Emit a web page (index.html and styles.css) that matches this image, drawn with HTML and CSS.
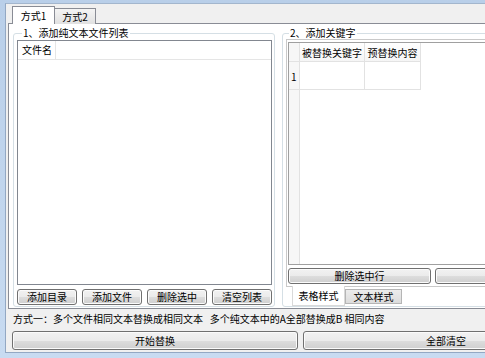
FILE: index.html
```html
<!DOCTYPE html>
<html lang="zh-CN">
<head>
    <meta charset="UTF-8">
    <title>文本批量替换</title>
    <link rel="stylesheet" href="styles.css">
</head>
<body>
    <div class="window">
        <div class="client">
            <div class="tabcontrol">
                <div class="tabstrip">
                    <div class="tab active">方式1</div>
                    <div class="tab">方式2</div>
                </div>
                <div class="tabpage">
                    <fieldset class="group group-files">
                        <legend>1、添加纯文本文件列表</legend>
                        <div class="listview">
                            <div class="lv-header">
                                <div class="lv-col">文件名</div>
                            </div>
                        </div>
                        <div class="btn-row">
                            <button class="btn btn-small">添加目录</button>
                            <button class="btn btn-small">添加文件</button>
                            <button class="btn btn-small">删除选中</button>
                            <button class="btn btn-small">清空列表</button>
                        </div>
                    </fieldset>

                    <fieldset class="group group-keys">
                        <legend>2、添加关键字</legend>
                        <div class="subpage">
                            <div class="grid">
                                <div class="cell corner"></div>
                                <div class="cell head">被替换关键字</div>
                                <div class="cell head">预替换内容</div>
                                <div class="cell blank"></div>
                                <div class="cell rowhead">1</div>
                                <div class="cell"></div>
                                <div class="cell"></div>
                                <div class="cell blank"></div>
                                <div class="cell rowfill"></div>
                            </div>
                            <div class="btn-row">
                                <button class="btn btn-wide">删除选中行</button>
                                <button class="btn btn-wide"></button>
                            </div>
                        </div>
                        <div class="subtabs">
                            <div class="subtab active">表格样式</div>
                            <div class="subtab">文本样式</div>
                        </div>
                    </fieldset>
                </div>
            </div>

            <div class="hint">方式一：多个文件相同文本替换成相同文本&nbsp;&nbsp;&nbsp;多个纯文本中的A全部替换成B 相同内容</div>

            <div class="actions">
                <button class="btn btn-main">开始替换</button>
                <button class="btn btn-main btn-clear">全部清空</button>
            </div>
        </div>
    </div>
</body>
</html>
```

FILE: styles.css
```css
body, html {
    margin: 0;
    padding: 0;
    background-color: #c2d6ee;
}
.window {
    width: 485px;
    height: 358px;
    box-sizing: border-box;
    overflow: hidden;
    background: linear-gradient(#b9cfe9, #c8dbf1);
    padding: 3px 0 5px 5px;
    font-family: "Noto Sans CJK SC", sans-serif;
    font-size: 10px;
    line-height: 12px;
    color: #000;
}
.client {
    width: 600px;
    height: 100%;
    box-sizing: border-box;
    background-color: #f0f0f0;
    border-top: 1px solid #a3b6cd;
    border-left: 1px solid #93a8c3;
    border-bottom: 1px solid #93a8c3;
    padding: 2px 0 0 2px;
}

/* main tab control */
.tabstrip {
    display: flex;
    align-items: flex-end;
    height: 18px;
    padding-left: 4px;
    margin-bottom: -1px;
    position: relative;
    z-index: 1;
}
.tab {
    width: 42px;
    height: 16px;
    box-sizing: border-box;
    border: 1px solid #898c95;
    border-bottom: none;
    background: linear-gradient(#f4f4f4, #e1e1e1);
    text-align: center;
    padding-top: 2px;
    margin-left: -1px;
}
.tab.active {
    width: 43px;
    height: 18px;
    margin-left: 0;
    padding-top: 3px;
    background-color: #fff;
    background-image: none;
}
.tabpage {
    width: 590px;
    height: 286px;
    box-sizing: border-box;
    border: 1px solid #898c95;
    background-color: #fff;
    display: flex;
    gap: 7px;
    padding: 3px 0 0 4px;
}

/* group boxes */
.group {
    margin: 0;
    padding: 0;
    border: 1px solid #d5dfe5;
    border-radius: 3px;
    box-sizing: border-box;
    height: 280px;
    display: flex;
    flex-direction: column;
}
.group legend {
    padding: 0 1px;
    margin-left: 5px;
    line-height: 12px;
}
.group-files {
    width: 263px;
    padding: 0 2px 0 3px;
}
.group-keys {
    width: 320px;
    padding-left: 3px;
}
.group-keys legend {
    margin-left: 3px;
}

.listview {
    margin-top: 1px;
    height: 245px;
    box-sizing: border-box;
    border: 1px solid #828790;
    background-color: #fff;
}
.lv-header {
    height: 18px;
    border-bottom: 1px solid #e5e5e5;
    display: flex;
}
.lv-col {
    width: 33px;
    padding-left: 4px;
    line-height: 18px;
    border-right: 1px solid #e5e5e5;
}

.btn-row {
    display: flex;
    gap: 5px;
    margin-top: 4px;
}
.btn {
    font-family: inherit;
    font-size: 10px;
    line-height: 12px;
    color: #000;
    height: 16px;
    padding: 0;
    box-sizing: border-box;
    border: 1px solid #707070;
    border-radius: 3px;
    background: linear-gradient(#f2f2f2 0%, #ebebeb 50%, #dddddd 51%, #cfcfcf 100%);
    box-shadow: inset 0 0 0 1px #fbfbfb;
}
.btn-small {
    width: 60px;
}

/* right side: keyword grid */
.subpage {
    height: 248px;
    box-sizing: border-box;
    border: 1px solid #c9c9c9;
    padding: 2px 1px 0 1px;
}
.grid {
    height: 223px;
    box-sizing: border-box;
    border: 1px solid #a0a0a0;
    border-right: none;
    background-color: #fff;
    display: grid;
    grid-template-columns: 11px 65px 56px 1fr;
    grid-template-rows: 19px 28px 1fr;
}
.cell {
    border-right: 1px solid #e2e2e2;
    border-bottom: 1px solid #e2e2e2;
}
.cell.blank {
    border: none;
}
.corner, .rowhead, .rowfill {
    background-color: #f7f7f7;
}
.head {
    text-align: center;
    line-height: 19px;
    background: linear-gradient(#ffffff, #f5f5f5);
}
.rowhead {
    padding: 9px 0 0 2px;
}
.rowfill {
    border-bottom: none;
}
.subpage .btn-row {
    gap: 4px;
    margin-top: 3px;
}
.btn-wide {
    width: 143px;
}

.subtabs {
    display: flex;
    align-items: flex-start;
    margin-top: -1px;
    padding-left: 6px;
}
.subtab {
    width: 57px;
    height: 15px;
    box-sizing: border-box;
    margin-top: 3px;
    border: 1px solid #b5b5b5;
    background: linear-gradient(#ececec, #dcdcdc);
    text-align: center;
    line-height: 13px;
}
.subtab.active {
    width: 53px;
    height: 20px;
    margin-top: 0;
    border: 1px solid #d9d9d9;
    border-top: none;
    background: #fff;
    line-height: 19px;
}

/* bottom */
.hint {
    margin: 4px 0 0 5px;
    white-space: nowrap;
}
.actions {
    display: flex;
    gap: 5px;
    margin: 6px 0 0 4px;
}
.btn-main {
    width: 286px;
    height: 19px;
}
```
